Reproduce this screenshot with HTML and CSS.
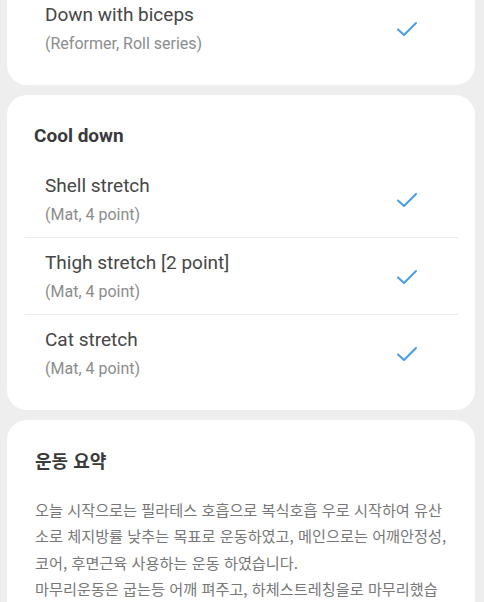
FILE: index.html
```html
<!DOCTYPE html>
<html lang="ko">
<head>
    <meta charset="UTF-8">
    <title>운동 기록</title>
    <link rel="stylesheet" href="styles.css">
</head>
<body>
    <div class="page">
        <div class="card card-top">
            <div class="item">
                <div class="item-text">
                    <div class="item-name">Down with biceps</div>
                    <div class="item-sub">(Reformer, Roll series)</div>
                </div>
                <svg class="check" width="22" height="16" viewBox="0 0 22 16"><path d="M2 8.5 L8 14 L20 2" fill="none" stroke="#4a9fe6" stroke-width="2.1" stroke-linecap="round" stroke-linejoin="round"/></svg>
            </div>
        </div>

        <div class="card">
            <h2 class="card-title">Cool down</h2>
            <div class="item">
                <div class="item-text">
                    <div class="item-name">Shell stretch</div>
                    <div class="item-sub">(Mat, 4 point)</div>
                </div>
                <svg class="check" width="22" height="16" viewBox="0 0 22 16"><path d="M2 8.5 L8 14 L20 2" fill="none" stroke="#4a9fe6" stroke-width="2.1" stroke-linecap="round" stroke-linejoin="round"/></svg>
            </div>
            <div class="item">
                <div class="item-text">
                    <div class="item-name">Thigh stretch [2 point]</div>
                    <div class="item-sub">(Mat, 4 point)</div>
                </div>
                <svg class="check" width="22" height="16" viewBox="0 0 22 16"><path d="M2 8.5 L8 14 L20 2" fill="none" stroke="#4a9fe6" stroke-width="2.1" stroke-linecap="round" stroke-linejoin="round"/></svg>
            </div>
            <div class="item">
                <div class="item-text">
                    <div class="item-name">Cat stretch</div>
                    <div class="item-sub">(Mat, 4 point)</div>
                </div>
                <svg class="check" width="22" height="16" viewBox="0 0 22 16"><path d="M2 8.5 L8 14 L20 2" fill="none" stroke="#4a9fe6" stroke-width="2.1" stroke-linecap="round" stroke-linejoin="round"/></svg>
            </div>
        </div>

        <div class="card card-summary">
            <h2 class="card-title summary-title">운동 요약</h2>
            <p class="summary">오늘 시작으로는 필라테스 호흡으로 복식호흡 우로 시작하여 유산소로 체지방률 낮추는 목표로 운동하였고, 메인으로는 어깨안정성, 코어, 후면근육 사용하는 운동 하였습니다.<br>마무리운동은 굽는등 어깨 펴주고, 하체스트레칭을로 마무리했습니다.</p>
        </div>
    </div>
</body>
</html>
```

FILE: styles.css
```css
html, body {
    margin: 0;
    padding: 0;
    background-color: #eeeeee;
}

body {
    font-family: Roboto, "Noto Sans CJK KR", sans-serif;
    overflow: hidden;
}

.page {
    margin-top: -39px; /* 스크롤된 상태 */
    padding: 0 9px 0 7px;
    display: flex;
    flex-direction: column;
    gap: 10px;
}

.card {
    background-color: white;
    border-radius: 20px;
    padding: 29px 17px 19px 18px;
}

.card-title {
    margin: 0 0 13px 9px;
    font-size: 19px;
    line-height: 24px;
    font-weight: bold;
    color: #3a3a3a;
}

.item {
    display: flex;
    align-items: center;
    justify-content: space-between;
    padding: 13px 40px 12px 20px;
    border-bottom: 1px solid #ececec;
}

.item:last-child {
    border-bottom: none;
}

.item-name {
    font-size: 19px;
    line-height: 24px;
    color: #464646;
}

.item-sub {
    margin-top: 7px;
    font-size: 16px;
    line-height: 20px;
    color: #8c8c8c;
}

.check {
    display: block;
}

.card-summary {
    padding: 28px 28px 20px 28px;
}

.summary-title {
    margin: 0 0 24px 0;
    font-family: "Noto Sans CJK KR", sans-serif;
    font-size: 18px;
}

.summary {
    margin: 0;
    font-family: "Noto Sans CJK KR", sans-serif;
    font-size: 15.2px;
    line-height: 26.3px;
    color: #777;
}
```
